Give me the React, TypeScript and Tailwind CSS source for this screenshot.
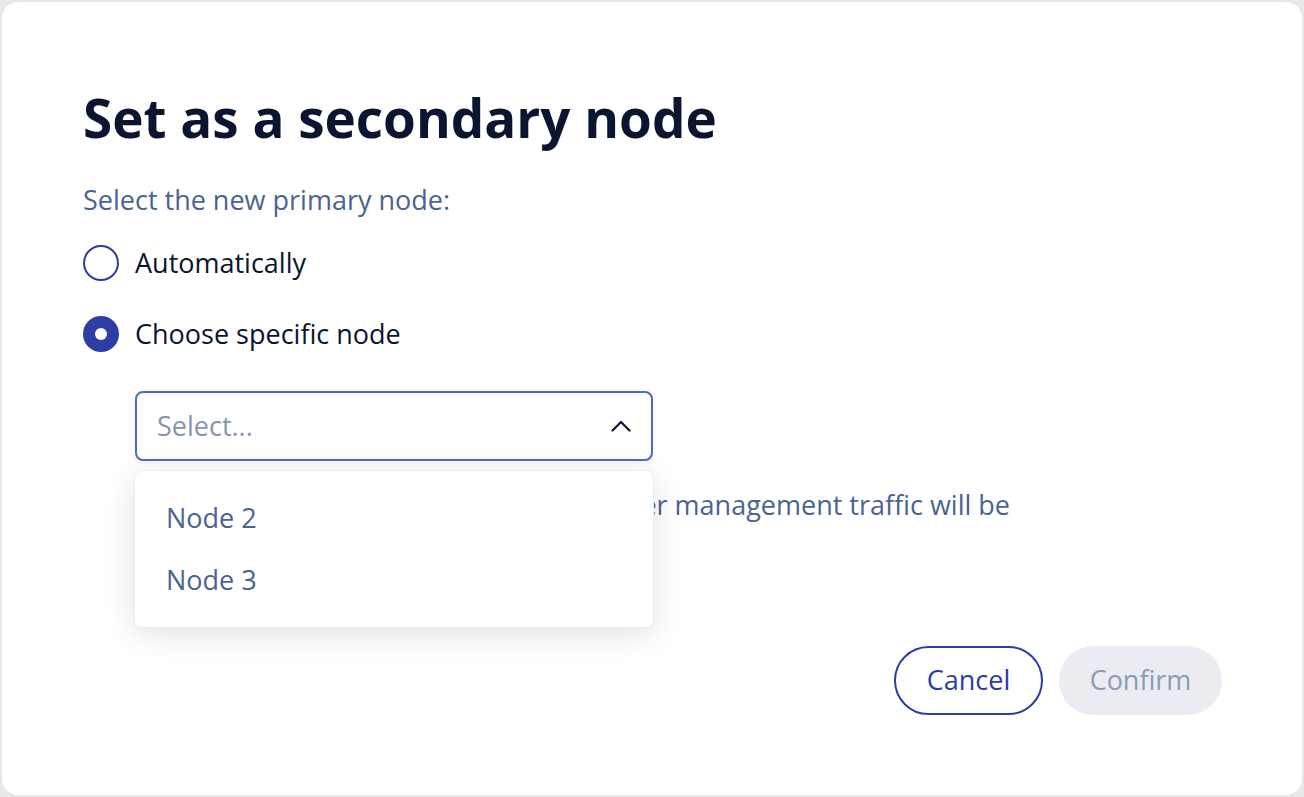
const FONT = { fontFamily: '"Open Sans", "Noto Sans", sans-serif' }

function Radio({ checked, label }: { checked: boolean; label: string }) {
  return (
    <label className="flex h-[36px] items-center gap-[16px]">
      {checked ? (
        <span className="flex h-[36px] w-[36px] shrink-0 items-center justify-center rounded-full bg-[#2c3ea3]">
          <span className="h-[12px] w-[12px] rounded-full bg-white" />
        </span>
      ) : (
        <span className="h-[36px] w-[36px] shrink-0 rounded-full border-2 border-[#2c3ea3] bg-white" />
      )}
      <span className="text-[27px] leading-[36px] text-[#0b1530]">{label}</span>
    </label>
  )
}

export default function App() {
  return (
    <div style={FONT} className="h-[797px] w-[1304px] bg-[#e9e9e9]">
      <div className="flex h-full w-full flex-col rounded-[18px] border-2 border-[#e6e6e6] bg-white pl-[81px] pr-[80px] pt-[80px]">
        <h1 className="text-[53px] font-bold leading-[72px] text-[#0b1530]">Set as a secondary node</h1>

        <p className="mt-[28px] text-[27px] leading-[36px] text-[#4a6491]">Select the new primary node:</p>

        <div className="mt-[27px] flex flex-col gap-[35px]">
          <Radio checked={false} label="Automatically" />
          <Radio checked label="Choose specific node" />
        </div>

        <div className="relative ml-[52px] mt-[39px] w-[518px]">
          <div className="flex h-[70px] items-center justify-between rounded-[8px] border-2 border-[#4a6bc9] bg-white pl-[20px] pr-[20px] shadow-[0_2px_6px_rgba(0,0,0,0.05)]">
            <span className="text-[27px] text-[#8595b0]">Select...</span>
            {/* chevron up */}
            <svg width="20" height="12" viewBox="0 0 20 12" fill="none" className="text-[#0b1530]">
              <polyline points="1.5,10.5 10,2 18.5,10.5" stroke="currentColor" strokeWidth="2.2" strokeLinecap="round" strokeLinejoin="round" />
            </svg>
          </div>

          <div className="absolute left-[-1px] top-[79px] z-10 w-[520px] rounded-[8px] border border-[#ececec] bg-white py-[16px] shadow-[0_6px_30px_rgba(0,0,0,0.12)]">
            <div className="px-[31px] py-[12px] text-[27px] leading-[38px] text-[#4a6491]">Node 2</div>
            <div className="px-[31px] py-[12px] text-[27px] leading-[38px] text-[#4a6491]">Node 3</div>
          </div>
        </div>

        <p className="ml-[62px] mt-[24px] w-[880px] text-[27px] leading-[40px] text-[#4a6491]">
          The virtual IP address used for the cluster management traffic will be moved to the new primary node.
        </p>

        <div className="mt-auto mb-[80px] flex justify-end gap-[16px]">
          <button className="h-[69px] w-[149px] rounded-full border-2 border-[#2c3ea3] bg-white text-[27px] text-[#2c3ea3]">
            Cancel
          </button>
          <button className="h-[69px] w-[163px] rounded-full bg-[#ebecf2] text-[27px] text-[#8a9bb8]">
            Confirm
          </button>
        </div>
      </div>
    </div>
  )
}
